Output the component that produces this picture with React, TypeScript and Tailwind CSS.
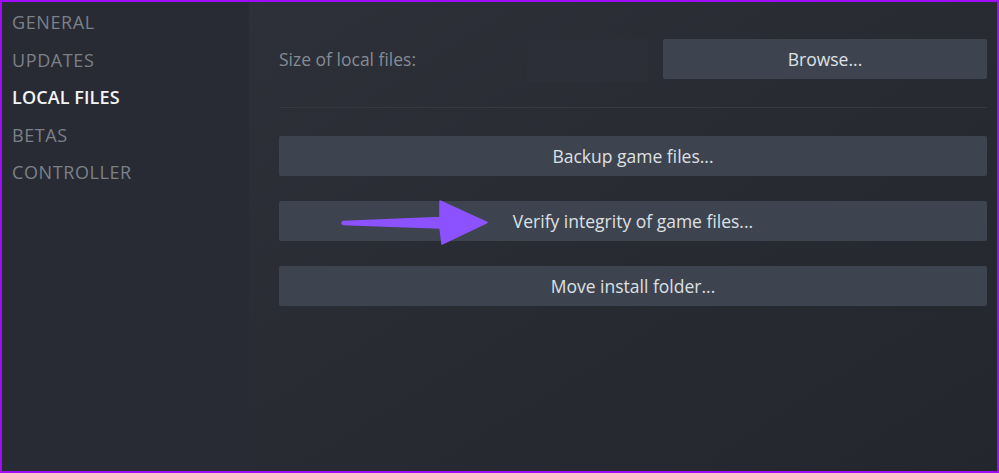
import React from "react";

const font = { fontFamily: '"Open Sans", "Noto Sans", "Liberation Sans", sans-serif' };

function Btn({ children }: { children: React.ReactNode }) {
  return (
    <div className="h-[40px] rounded-[2px] bg-[#3d4450] flex items-center justify-center text-[17.5px] text-[#dde0e3]">
      {children}
    </div>
  );
}

export default function App() {
  const items = ["GENERAL", "UPDATES", "LOCAL FILES", "BETAS", "CONTROLLER"];
  return (
    <div
      className="w-[999px] h-[473px] border-2 border-[#a00cf7] flex bg-[#292c34] overflow-hidden"
      style={font}
    >
      <div className="w-[247px] shrink-0 bg-[#282b33] pt-[2px] pl-[10px]">
        {items.map((t) => (
          <div
            key={t}
            className={
              "h-[37.5px] flex items-center text-[18px] " +
              (t === "LOCAL FILES"
                ? "text-[#f2f4f6] font-semibold tracking-[0.1px]"
                : "text-[#7c8089] tracking-[0.6px]")
            }
          >
            {t}
          </div>
        ))}
      </div>
      <div className="relative flex-1 bg-gradient-to-br from-[#2d3038] to-[#23262d] pl-[30px] pr-[10px] pt-[37px]">
        <div className="flex items-start">
          <div className="flex-1 h-[40px] flex items-center text-[17.5px] text-[#858b94]">
            Size of local files:
          </div>
          <div className="w-[121px] h-[43px] bg-[#2c2f37] mr-[15px]" />
          <div className="w-[324px]">
            <Btn>Browse...</Btn>
          </div>
        </div>
        <div className="mt-[25px] h-px bg-[#363940]" />
        <div className="mt-[28px] flex flex-col gap-[25px]">
          <Btn>Backup game files...</Btn>
          <Btn>Verify integrity of game files...</Btn>
          <Btn>Move install folder...</Btn>
        </div>
        <svg
          className="absolute left-[92px] top-[195px]"
          width="150"
          height="52"
          viewBox="0 0 150 52"
        >
          <path
            d="M2 24.5 Q0 26 2 27.5 L99 31 L101 47 L146 25.5 L99 4 L99 20.5 Z"
            fill="#8c52ff"
            stroke="#8c52ff"
            strokeWidth="1.5"
            strokeLinejoin="round"
          />
        </svg>
      </div>
    </div>
  );
}
